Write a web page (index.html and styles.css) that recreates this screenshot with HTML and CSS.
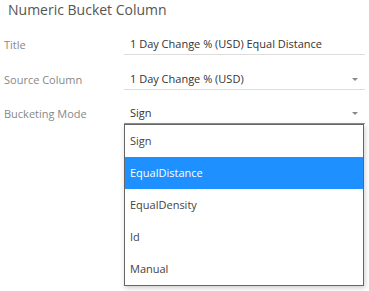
FILE: index.html
```html
<!DOCTYPE html>
<html>
<head>
    <title>Numeric Bucket Column</title>
    <link rel="stylesheet" href="styles.css">
</head>
<body>
    <h1 class="heading">Numeric Bucket Column</h1>

    <div class="form">
        <div class="row">
            <label class="label">Title</label>
            <div class="field">1 Day Change % (USD) Equal Distance</div>
        </div>

        <div class="row">
            <label class="label">Source Column</label>
            <div class="field select">
                <span>1 Day Change % (USD)</span>
                <span class="arrow"></span>
            </div>
        </div>

        <div class="row">
            <label class="label">Bucketing Mode</label>
            <div class="field select open">
                <span>Sign</span>
                <span class="arrow"></span>

                <ul class="menu">
                    <li>Sign</li>
                    <li class="selected">EqualDistance</li>
                    <li>EqualDensity</li>
                    <li>Id</li>
                    <li>Manual</li>
                </ul>
            </div>
        </div>
    </div>
</body>
</html>
```

FILE: styles.css
```css
html, body {
    height: 100%;
}

body {
    margin: 0;
    padding: 0 4px;
    box-sizing: border-box;
    font-family: 'Open Sans', 'Noto Sans', sans-serif;
    background: #fff;
    color: #333;
}

.heading {
    margin: 0 0 0 4px;
    height: 20px;
    line-height: 20px;
    font-size: 14px;
    font-weight: normal;
    color: #555;
}

.form {
    padding-top: 14px;
}

.row {
    display: grid;
    grid-template-columns: 120px 241px;
    align-items: center;
    margin-bottom: 14px;
}

.row:nth-child(2) {
    margin-bottom: 13px;
}

.label {
    font-size: 11px;
    color: #888;
}

.field {
    position: relative;
    height: 20px;
    line-height: 20px;
    padding-left: 6px;
    border-bottom: 1px solid #ddd;
    font-size: 11px;
    color: #333;
}

.select {
    display: flex;
    justify-content: space-between;
    align-items: center;
    padding-right: 7px;
}

.select.open {
    border-bottom-color: #2bb5bd;
}

.arrow {
    width: 0;
    height: 0;
    border-left: 3px solid transparent;
    border-right: 3px solid transparent;
    border-top: 3px solid #888;
}

.menu {
    position: absolute;
    top: 21px;
    left: 0;
    z-index: 1;
    width: 238px;
    margin: 0;
    padding: 0;
    list-style: none;
    background: #fff;
    border: 1px solid #666;
    box-shadow: 1px 2px 5px rgba(0, 0, 0, 0.2);
}

.menu li {
    height: 32px;
    line-height: 32px;
    padding-left: 5px;
    color: #444;
}

.menu li.selected {
    background: #1e90ff;
    color: #fff;
}
```
